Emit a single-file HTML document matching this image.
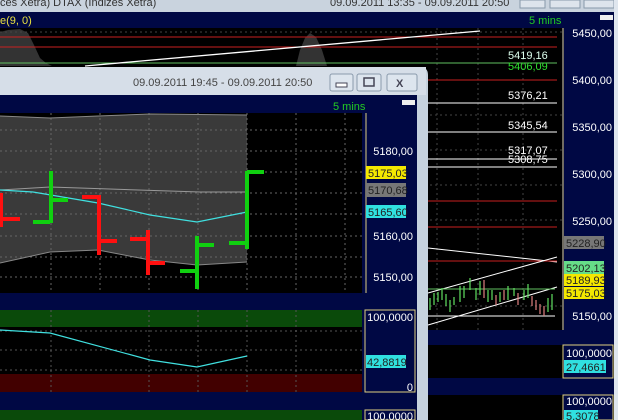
<!DOCTYPE html>
<html><head><meta charset="utf-8"><style>
body{margin:0;width:618px;height:420px;overflow:hidden;background:#000;font-family:"Liberation Sans",sans-serif;}
svg{position:absolute;left:0;top:0}
</style></head><body>
<svg width="618" height="420" viewBox="0 0 618 420" font-family="Liberation Sans, sans-serif" font-size="11">
<rect x="0" y="0" width="618" height="420" fill="#000"/>
<rect x="0" y="0" width="618" height="12" fill="#c9d3de"/>
<text x="0" y="6" fill="#333" font-size="11">ces Xetra) DTAX (Indizes Xetra)</text>
<text x="330" y="6" fill="#333" font-size="11">09.09.2011 13:35 - 09.09.2011 20:50</text>
<rect x="520" y="0" width="25" height="8" fill="#dde4ec" stroke="#8899aa"/>
<rect x="550" y="0" width="30" height="8" fill="#dde4ec" stroke="#8899aa"/>
<rect x="584" y="0" width="30" height="8" fill="#dde4ec" stroke="#8899aa"/>
<rect x="0" y="12" width="614" height="16" fill="#000844"/>
<text x="0" y="24" fill="#e8e040" font-size="11">e(9, 0)</text>
<text x="529" y="24" fill="#22cc22" font-size="11">5 mins</text>
<rect x="600" y="15" width="13" height="5" fill="#eee"/>
<rect x="614" y="0" width="4" height="420" fill="#dfe6ee"/>
<rect x="562" y="28" width="52" height="302" fill="#000844"/>
<line x1="563" y1="28" x2="563" y2="330" stroke="#e0d080"/>
<g fill="#fff" font-size="11" text-anchor="end">
<text x="612" y="37">5450,00</text><text x="612" y="84">5400,00</text><text x="612" y="131">5350,00</text><text x="612" y="178">5300,00</text><text x="612" y="225">5250,00</text><text x="612" y="320">5150,00</text>
</g>
<rect x="564" y="236" width="40" height="13" fill="#777"/><text x="566" y="247" fill="#222">5228,90</text>
<rect x="564" y="261" width="40" height="13" fill="#66dd88"/><text x="566" y="272" fill="#222">5202,13</text>
<rect x="564" y="274" width="40" height="12" fill="#f4e800"/><text x="566" y="284" fill="#222">5189,93</text>
<rect x="564" y="287" width="40" height="12" fill="#f4e800"/><text x="566" y="297" fill="#222">5175,03</text>
<path d="M0 32 L8 30 L20 29 L28 33 L34 45 L40 58 L46 63 L52 66 L0 66Z" fill="#333"/>
<path d="M296 66 L300 50 L305 38 L310 33 L316 37 L322 50 L327 66Z" fill="#333"/>
<g stroke="#444" stroke-dasharray="2,3">
<line x1="0" y1="32" x2="562" y2="32"/><line x1="0" y1="115" x2="562" y2="115"/><line x1="0" y1="150" x2="562" y2="150"/><line x1="0" y1="185" x2="562" y2="185"/><line x1="0" y1="220" x2="562" y2="220"/><line x1="0" y1="306" x2="562" y2="306"/>
<line x1="478" y1="28" x2="478" y2="330"/><line x1="523" y1="28" x2="523" y2="330"/><line x1="437" y1="28" x2="437" y2="330"/>
</g>
<line x1="0" y1="37" x2="557" y2="37" stroke="#c82020"/>
<line x1="0" y1="47" x2="557" y2="47" stroke="#c82020"/>
<line x1="0" y1="63" x2="557" y2="63" stroke="#60c060"/>
<line x1="0" y1="80" x2="557" y2="80" stroke="#c82020"/>
<line x1="85" y1="66" x2="480" y2="31" stroke="#fff" stroke-width="1.3"/>
<text x="508" y="59" fill="#dfe" font-size="11">5419,16</text>
<text x="508" y="70" fill="#30e030" font-size="11">5406,09</text>
<text x="508" y="99" fill="#fff" font-size="11">5376,21</text>
<line x1="428" y1="103" x2="557" y2="103" stroke="#fff"/>
<text x="508" y="129" fill="#fff">5345,54</text>
<line x1="428" y1="132" x2="557" y2="132" stroke="#fff"/>
<text x="508" y="154" fill="#fff">5317,07</text><text x="508" y="163" fill="#fff">5308,75</text>
<line x1="428" y1="159" x2="557" y2="159" stroke="#fff"/>
<line x1="428" y1="167" x2="557" y2="167" stroke="#fff"/>
<line x1="428" y1="201" x2="557" y2="201" stroke="#c82020"/>
<line x1="428" y1="227" x2="557" y2="227" stroke="#c82020"/>
<line x1="428" y1="248" x2="557" y2="262" stroke="#fff"/>
<line x1="428" y1="261" x2="557" y2="261" stroke="#c82020"/>
<line x1="428" y1="293" x2="557" y2="257" stroke="#fff"/>
<line x1="428" y1="325" x2="557" y2="287" stroke="#fff"/>
<line x1="428" y1="289" x2="555" y2="289" stroke="#60c060"/>
<line x1="428" y1="316" x2="555" y2="316" stroke="#fff"/>
<g stroke="#60e060" stroke-width="1.2">
<path d="M430 310v-12M434 305v-12M438 302v-10M442 300v-12M446 306v-12M450 312v-12M454 305v-8M460 302v-16M464 298v-12M470 290v-12M476 300v-12M480 295v-14M488 302v-12M492 300v-10M500 302v-10M508 300v-14M514 296v-8M524 300v-10M528 298v-14M548 312v-14M552 310v-16"/>
</g>
<g stroke="#e08080" stroke-width="1.2">
<path d="M484 298v-18M496 305v-10M504 300v-10M518 305v-12M532 306v-10M536 310v-10M540 314v-10M544 316v-10"/>
</g>
<rect x="428" y="330" width="186" height="15" fill="#000844"/>
<rect x="428" y="378" width="186" height="17" fill="#000844"/>
<rect x="563" y="345" width="50" height="33" fill="#000844" stroke="#e0d080"/>
<text x="612" y="357" fill="#fff" text-anchor="end">100,0000</text>
<rect x="564" y="360" width="42" height="13" fill="#30e0e0"/><text x="566" y="371" fill="#222">27,4661</text>
<rect x="563" y="395" width="50" height="25" fill="#000844" stroke="#e0d080"/>
<text x="612" y="405" fill="#fff" text-anchor="end">100,0000</text>
<rect x="564" y="410" width="34" height="10" fill="#30e0e0"/><text x="566" y="420" fill="#222">5,3078</text>

<path d="M0 67 H420 Q428 67 428 75 V420 H0Z" fill="#c6d2de"/>
<rect x="0" y="67" width="426" height="28" fill="#d6dee8"/>
<text x="133" y="86" fill="#444" font-size="11">09.09.2011 19:45 - 09.09.2011 20:50</text>
<rect x="330" y="74" width="23" height="17" rx="2" fill="#dde5ee" stroke="#8a9aac"/><rect x="336" y="83" width="11" height="4" fill="#fff" stroke="#445"/>
<rect x="357" y="74" width="24" height="17" rx="2" fill="#dde5ee" stroke="#8a9aac"/><rect x="364" y="78" width="10" height="8" fill="none" stroke="#445" stroke-width="1.5"/>
<rect x="387" y="74" width="30" height="17" rx="2" fill="#dde5ee" stroke="#8a9aac"/><text x="396" y="87" fill="#445" font-size="11" font-weight="bold">X</text>
<rect x="0" y="95" width="417" height="325" fill="#000844"/>
<text x="333" y="110" fill="#22cc22" font-size="11">5 mins</text>
<rect x="402" y="100" width="13" height="5" fill="#eee"/>
<rect x="0" y="113" width="362" height="180" fill="#000"/>
<path d="M0 116 L50 118 L98 116 L150 114 L247 115 L247 262 L197 265 L150 260 L98 250 L50 252 L0 263Z" fill="#3a3a3a"/>
<g stroke="#666" stroke-dasharray="2,3">
<line x1="0" y1="130" x2="362" y2="130"/><line x1="0" y1="151" x2="362" y2="151"/><line x1="0" y1="172" x2="362" y2="172"/><line x1="0" y1="193" x2="362" y2="193"/><line x1="0" y1="214" x2="362" y2="214"/><line x1="0" y1="236" x2="362" y2="236"/><line x1="0" y1="257" x2="362" y2="257"/><line x1="0" y1="277" x2="362" y2="277"/>
<line x1="51" y1="113" x2="51" y2="293"/><line x1="100" y1="113" x2="100" y2="293"/><line x1="149" y1="113" x2="149" y2="293"/><line x1="198" y1="113" x2="198" y2="293"/><line x1="247" y1="113" x2="247" y2="293"/><line x1="296" y1="113" x2="296" y2="293"/><line x1="345" y1="113" x2="345" y2="293"/>
</g>
<polyline points="0,116 50,118 98,116 150,114 247,115" fill="none" stroke="#888"/>
<polyline points="0,263 50,252 98,250 150,260 197,265 247,262" fill="none" stroke="#888"/>
<polyline points="0,190 50,187 200,192 247,192" fill="none" stroke="#999"/>
<polyline points="0,190 33,192 98,203 150,215 197,222 247,212" fill="none" stroke="#40e0e0" stroke-width="1.2"/>
<g fill="#ff1010">
<rect x="0" y="193" width="3" height="34"/><rect x="0" y="217" width="20" height="4"/>
<rect x="97" y="195" width="4" height="60"/><rect x="82" y="195" width="17" height="4"/><rect x="99" y="239" width="18" height="4"/>
<rect x="146" y="230" width="4" height="45"/><rect x="130" y="237" width="17" height="4"/><rect x="148" y="261" width="17" height="4"/>
</g>
<g fill="#10d010">
<rect x="49" y="171" width="4" height="52"/><rect x="33" y="220" width="17" height="4"/><rect x="51" y="198" width="17" height="4"/>
<rect x="195" y="236" width="4" height="53"/><rect x="180" y="269" width="17" height="4"/><rect x="197" y="243" width="17" height="4"/>
<rect x="245" y="171" width="4" height="78"/><rect x="229" y="241" width="17" height="4"/><rect x="247" y="170" width="17" height="4"/>
</g>
<rect x="365" y="113" width="50" height="180" fill="#000844"/>
<line x1="366" y1="113" x2="366" y2="293" stroke="#e0d080"/>
<g fill="#fff" text-anchor="end"><text x="413" y="155">5180,00</text><text x="413" y="240">5160,00</text><text x="413" y="281">5150,00</text></g>
<rect x="366" y="166" width="40" height="13" fill="#f4e800"/><text x="368" y="177" fill="#222">5175,03</text>
<rect x="366" y="183" width="40" height="14" fill="#777"/><text x="368" y="194" fill="#222">5170,68</text>
<rect x="366" y="205" width="40" height="13" fill="#30e0e0"/><text x="368" y="216" fill="#222">5165,60</text>
<rect x="0" y="310" width="362" height="17" fill="#0a4a0a"/>
<rect x="0" y="327" width="362" height="47" fill="#000"/>
<rect x="0" y="374" width="362" height="18" fill="#420000"/>
<g stroke="#555" stroke-dasharray="2,3">
<line x1="0" y1="350" x2="362" y2="350"/><line x1="0" y1="331" x2="362" y2="331"/><line x1="0" y1="370" x2="362" y2="370"/>
<line x1="51" y1="310" x2="51" y2="392"/><line x1="149" y1="310" x2="149" y2="392"/><line x1="198" y1="310" x2="198" y2="392"/><line x1="247" y1="310" x2="247" y2="392"/><line x1="296" y1="310" x2="296" y2="392"/>
</g>
<polyline points="0,330 50,333 150,360 197,367 247,356" fill="none" stroke="#40e0e0" stroke-width="1.2"/>
<rect x="365" y="310" width="50" height="82" fill="#000844" stroke="#e0d080"/>
<text x="413" y="321" fill="#fff" text-anchor="end">100,0000</text>
<text x="413" y="391" fill="#fff" text-anchor="end">0</text>
<rect x="366" y="355" width="40" height="13" fill="#30e0e0"/><text x="367" y="366" fill="#222">42,8819</text>
<rect x="0" y="410" width="362" height="10" fill="#0a4a0a"/>
<rect x="365" y="410" width="50" height="10" fill="#000844" stroke="#e0d080"/>
<text x="413" y="420" fill="#fff" text-anchor="end">100,0000</text>
</svg>
</body></html>
